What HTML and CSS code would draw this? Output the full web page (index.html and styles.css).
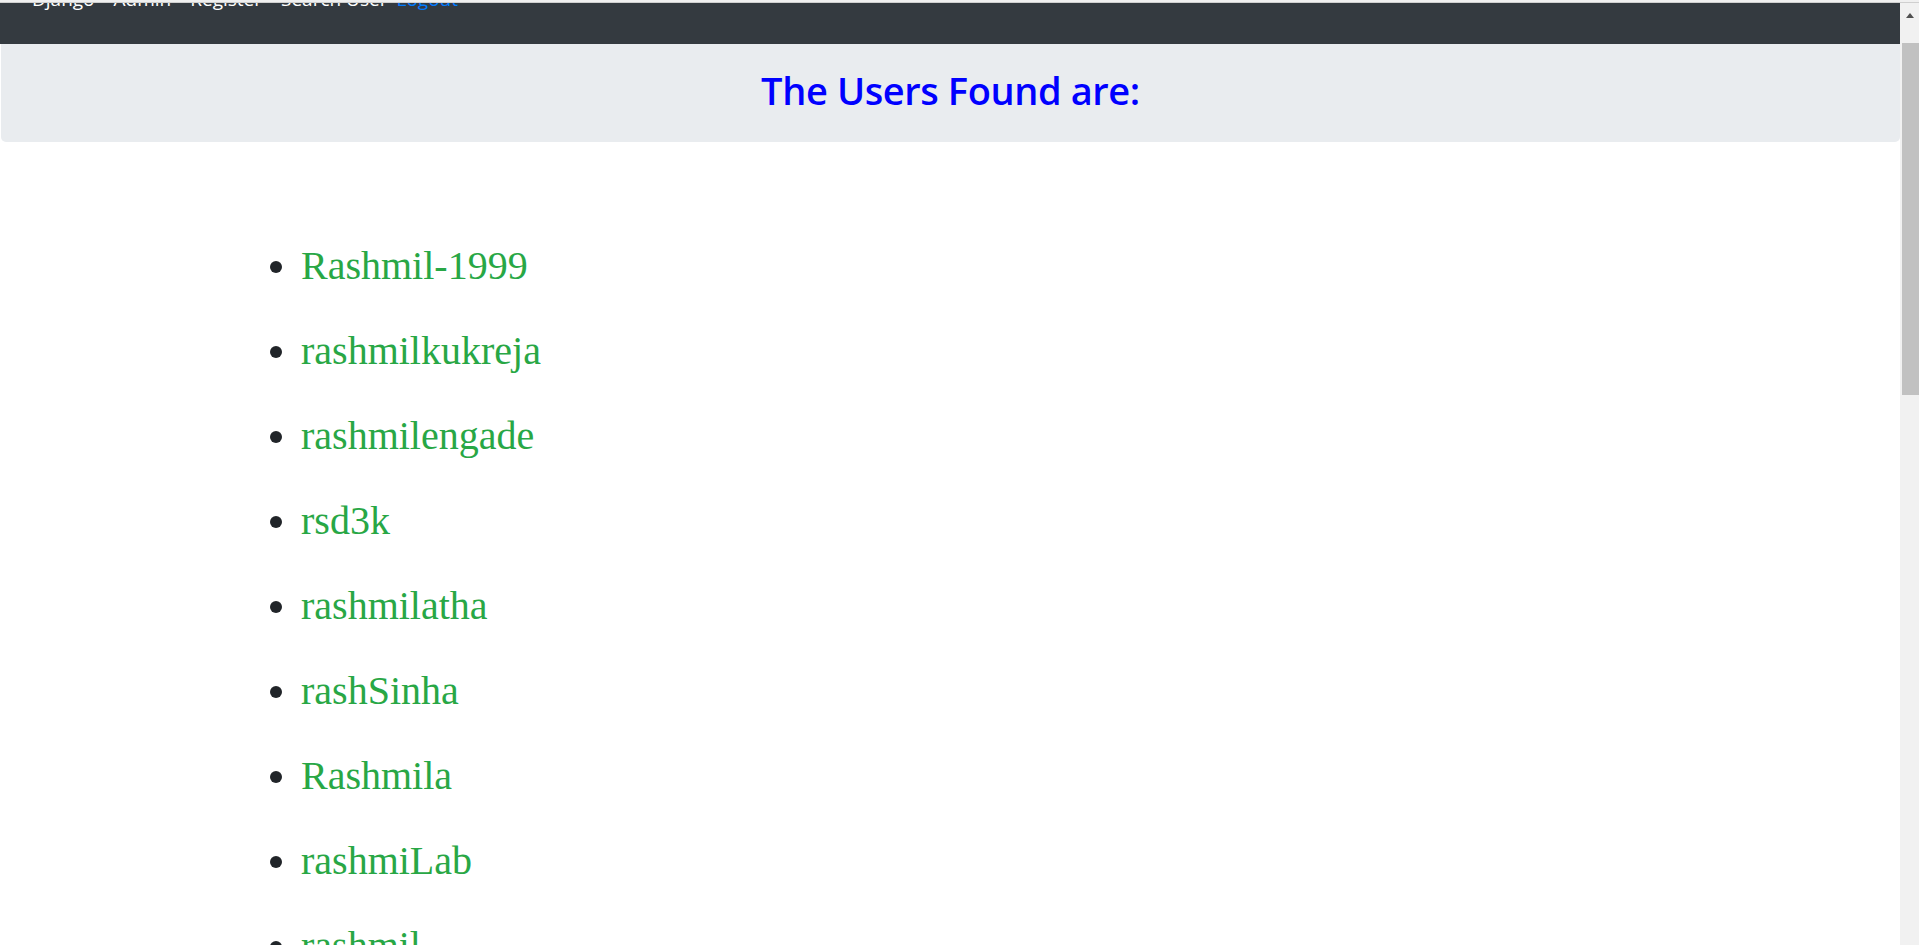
FILE: index.html
```html
<!DOCTYPE html>
<html>
<head>
<meta charset="utf-8">
<title>Users Found</title>
<link rel="stylesheet" href="styles.css">
</head>
<body>
<div class="chrome-strip"></div>
<div class="frame">
  <main class="page">
    <nav class="navbar">
      <div class="nav-links">
        <a class="nav-link">Django</a>
        <a class="nav-link">Admin</a>
        <a class="nav-link">Register</a>
        <a class="nav-link">Search User</a>
        <a class="nav-link logout">Logout</a>
      </div>
    </nav>
    <header class="jumbotron">
      <h1 class="title">The Users Found are:</h1>
    </header>
    <ul class="user-list">
      <li><a class="user">Rashmil-1999</a></li>
      <li><a class="user">rashmilkukreja</a></li>
      <li><a class="user">rashmilengade</a></li>
      <li><a class="user">rsd3k</a></li>
      <li><a class="user">rashmilatha</a></li>
      <li><a class="user">rashSinha</a></li>
      <li><a class="user">Rashmila</a></li>
      <li><a class="user">rashmiLab</a></li>
      <li><a class="user">rashmil</a></li>
    </ul>
  </main>
  <div class="scrollbar">
    <div class="arrow-up"></div>
    <div class="thumb"></div>
  </div>
</div>
</body>
</html>
```

FILE: styles.css
```css
html, body {
  margin: 0;
  padding: 0;
  height: 945px;
  overflow: hidden;
  background: #fff;
}

.chrome-strip {
  height: 2px;
  background: #f0f0f0;
  border-bottom: 1px solid #cfcfcf;
}

.frame {
  display: flex;
  height: 942px;
}

.page {
  flex: 1;
  min-width: 0;
  overflow: hidden;
}

.navbar {
  height: 41px;
  background: #343a40;
  overflow: hidden;
}

.nav-links {
  display: flex;
  gap: 19px;
  padding-left: 32px;
  margin-top: -19px;
  font-family: "Open Sans", "Noto Sans", sans-serif;
  font-size: 19px;
  line-height: 30px;
}

.nav-link {
  color: #fff;
  text-decoration: none;
}

.nav-link.logout {
  color: #007bff;
  margin-left: -10px;
}

.jumbotron {
  margin-left: 1px;
  background: #e9ecef;
  border-radius: 0 0 5px 5px;
  height: 98px;
  box-sizing: border-box;
  padding-bottom: 7px;
  display: flex;
  align-items: center;
  justify-content: center;
}

.title {
  margin: 0;
  font-family: "Open Sans", "Noto Sans", sans-serif;
  font-weight: 600;
  font-size: 38px;
  line-height: 48px;
  color: #0000ff;
  letter-spacing: -0.4px;
}

.user-list {
  margin: 101px 0 0 0;
  padding-left: 301px;
  font-family: "Liberation Serif", "Times New Roman", serif;
  font-size: 40px;
  line-height: 46px;
  color: #212529;
}

.user-list li {
  margin-bottom: 39px;
}

.user {
  color: #28a745;
  text-decoration: none;
}

.scrollbar {
  width: 19px;
  background: #f1f1f1;
  display: flex;
  flex-direction: column;
  align-items: flex-end;
}

.arrow-up {
  align-self: center;
  margin-top: 10px;
  width: 0;
  height: 0;
  border-left: 4.5px solid transparent;
  border-right: 4.5px solid transparent;
  border-bottom: 5px solid #505050;
}

.thumb {
  margin-top: 25px;
  width: 17px;
  height: 352px;
  background: #c1c1c1;
}
```
